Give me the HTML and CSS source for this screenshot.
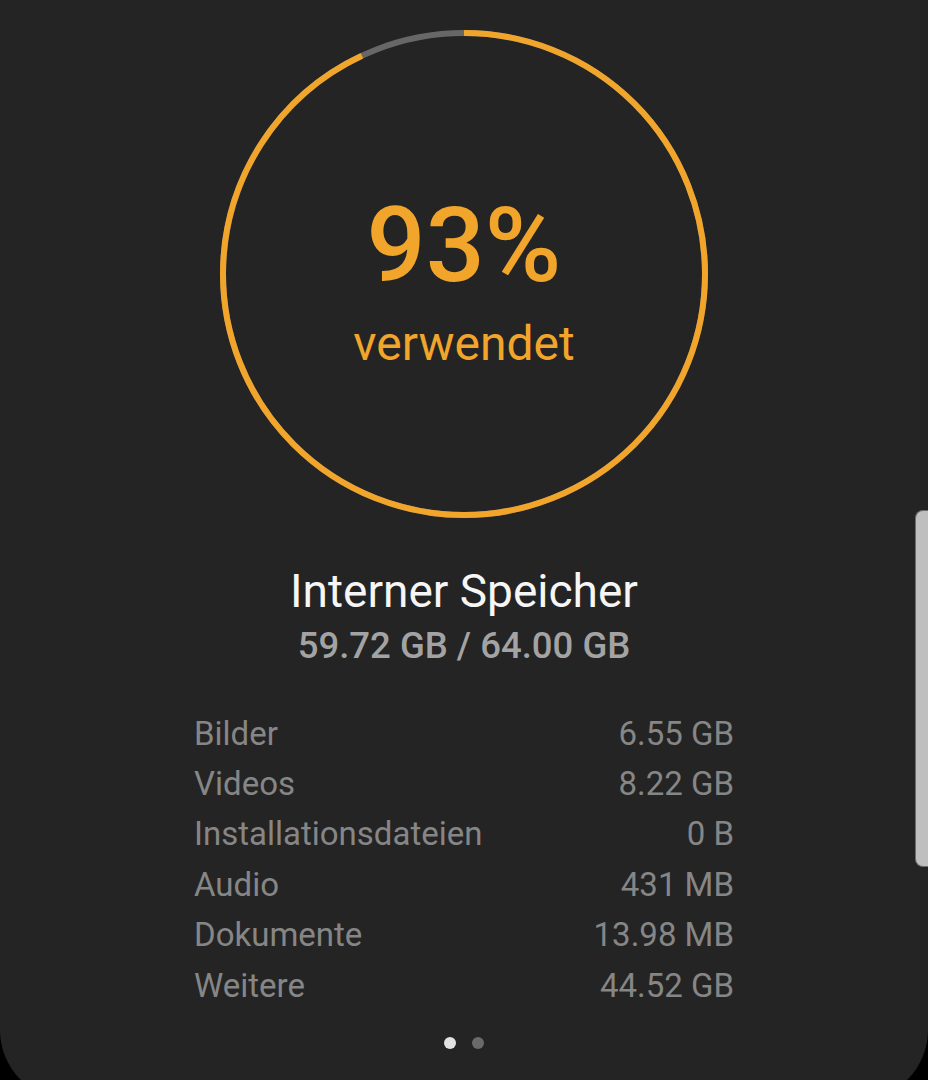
FILE: index.html
```html
<!DOCTYPE html>
<html lang="de">
<head>
    <meta charset="UTF-8">
    <meta name="viewport" content="width=device-width, initial-scale=1.0">
    <title>Speicher</title>
    <link rel="stylesheet" href="styles.css">
</head>
<body>

    <div class="screen">
        <div class="ring">
            <svg class="ring-svg" width="488" height="488" viewBox="0 0 488 488">
                <circle cx="244" cy="244" r="241" fill="none" stroke="#676767" stroke-width="6"/>
                <circle cx="244" cy="244" r="241" fill="none" stroke="#f2a52b" stroke-width="6"
                        stroke-dasharray="1408.2 1514.2" transform="rotate(-90 244 244)"/>
            </svg>
            <div class="ring-text">
                <div class="percent">93%</div>
                <div class="used">verwendet</div>
            </div>
        </div>

        <h2 class="title">Interner Speicher</h2>
        <p class="total">59.72 GB / 64.00 GB</p>

        <ul class="usage">
            <li><span>Bilder</span><span>6.55 GB</span></li>
            <li><span>Videos</span><span>8.22 GB</span></li>
            <li><span>Installationsdateien</span><span>0 B</span></li>
            <li><span>Audio</span><span>431 MB</span></li>
            <li><span>Dokumente</span><span>13.98 MB</span></li>
            <li><span>Weitere</span><span>44.52 GB</span></li>
        </ul>

        <div class="dots">
            <span class="dot active"></span>
            <span class="dot"></span>
        </div>

        <div class="scroll-handle"></div>
    </div>

</body>
</html>
```

FILE: styles.css
```css
html, body {
    margin: 0;
    padding: 0;
    background: #000;
    overflow: hidden;
}

body {
    font-family: Roboto, "Noto Sans", Arial, sans-serif;
}

.screen {
    position: relative;
    height: 1100px;
    background: #242424;
    border-radius: 0 0 70px 70px;
    padding-top: 30px;
    box-sizing: border-box;
    display: flex;
    flex-direction: column;
    align-items: center;
}

.ring {
    width: 488px;
    height: 488px;
    display: grid;
    justify-items: center;
}

.ring-svg,
.ring-text {
    grid-area: 1 / 1;
}

.ring-text {
    margin-top: 164px;
    text-align: center;
    color: #f2a52b;
}

.percent {
    font-size: 104px;
    font-weight: 500;
    line-height: 1;
}

.used {
    margin-top: 22px;
    font-size: 48px;
    line-height: 1;
}

.title {
    margin: 50px 0 0;
    font-size: 46px;
    font-weight: 400;
    line-height: 1;
    color: #f6f6f6;
}

.total {
    margin: 14px 0 0;
    font-size: 36.5px;
    font-weight: 500;
    line-height: 1;
    color: #a3a3a3;
}

.usage {
    list-style: none;
    margin: 44px 0 0;
    padding: 0;
    width: 540px;
}

.usage li {
    display: flex;
    justify-content: space-between;
    font-size: 33px;
    line-height: 50.4px;
    color: #868686;
}

.dots {
    margin-top: 26px;
    display: flex;
    gap: 16px;
}

.dot {
    width: 12px;
    height: 12px;
    border-radius: 50%;
    background: #6a6a6a;
}

.dot.active {
    background: #e2e2e2;
}

.scroll-handle {
    position: absolute;
    right: 0;
    top: 510px;
    width: 12px;
    height: 355px;
    background: #bfbfbf;
    border: 1px solid #6c6c6c;
    border-right: none;
    border-radius: 8px 0 0 8px;
}
```
